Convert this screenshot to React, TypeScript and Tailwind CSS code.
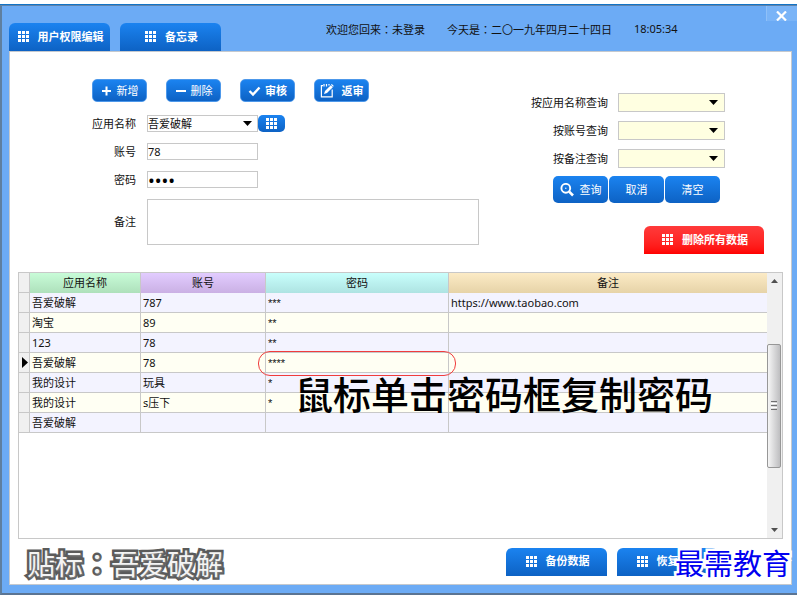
import React from 'react';

const UI_FONT = "font-['Noto_Sans','Noto_Sans_CJK_SC',sans-serif]";

function GridIcon() {
  return (
    <svg width="11" height="11" viewBox="0 0 11 11" fill="#fff" shapeRendering="crispEdges" aria-hidden="true">
      {[0, 4, 8].map((y) => [0, 4, 8].map((x) => <rect key={x + '-' + y} x={x} y={y} width="3" height="3" />))}
    </svg>
  );
}

function PlusIcon() {
  return (
    <svg width="11" height="11" viewBox="0 0 11 11" stroke="#fff" strokeWidth="2" aria-hidden="true">
      <path d="M1 6H10M5.5 1.5V10.5" />
    </svg>
  );
}

function MinusIcon() {
  return (
    <svg width="11" height="11" viewBox="0 0 11 11" stroke="#fff" strokeWidth="2" aria-hidden="true">
      <path d="M1 6H11" />
    </svg>
  );
}

function CheckIcon() {
  return (
    <svg width="13" height="12" viewBox="0 0 13 12" fill="none" stroke="#fff" strokeWidth="2.4" aria-hidden="true">
      <path d="M1.5 6L5 9.5L11.5 2.5" />
    </svg>
  );
}

function EditIcon() {
  return (
    <svg width="14" height="15" viewBox="0 0 14 15" fill="none" stroke="#fff" strokeWidth="1.2" aria-hidden="true">
      <path d="M3 2.6H1.4V13.8H12.2V6.5" />
      <path d="M4 1V3.5M6.5 1V3.5M9 1V2.5" />
      <path d="M4 11L5 8L10.8 2.2L12.8 4.2L7 10Z" fill="#fff" stroke="none" />
      <path d="M11.4 1.4L13.4 3.4" />
    </svg>
  );
}

function SearchIcon() {
  return (
    <svg width="14" height="14" viewBox="0 0 14 14" fill="none" stroke="#fff" aria-hidden="true">
      <circle cx="5.8" cy="5.3" r="4.4" strokeWidth="1.9" />
      <path d="M9.2 8.7L13 12.5" strokeWidth="2.6" />
      <circle cx="5.8" cy="5.3" r="0.7" fill="#fff" stroke="none" />
    </svg>
  );
}

function Triangle({ className = '' }: { className?: string }) {
  return (
    <svg className={className} width="9" height="5" viewBox="0 0 9 5" aria-hidden="true">
      <path d="M0 0H9L4.5 5Z" />
    </svg>
  );
}

const BLUE = 'bg-linear-to-b from-[#1b83f0] to-[#0d62c4] text-white';

function ToolButton({ icon, label, bold, gap }: { icon: React.ReactNode; label: string; bold?: boolean; gap: string }) {
  return (
    <button
      type="button"
      className={`flex h-[23px] w-[55px] items-center justify-center rounded-[5px] border border-[#4d98ea] ${BLUE} ${gap} ${bold ? 'font-bold' : ''}`}
    >
      {icon}
      {label}
    </button>
  );
}

function TabButton({ label, tone = BLUE, width = 'w-[101px]' }: { label: string; tone?: string; width?: string }) {
  return (
    <button
      type="button"
      className={`flex h-7 items-center justify-center gap-[9px] rounded-t-[6px] pb-px pl-[2px] font-bold ${width} ${tone}`}
    >
      <GridIcon />
      {label}
    </button>
  );
}

function Colon() {
  return <span className="font-['Noto_Sans_CJK_TC',sans-serif]">：</span>;
}

function QueryRow({ id, label }: { id: string; label: string }) {
  return (
    <div className="flex items-center gap-[10px]">
      <label htmlFor={id}>{label}</label>
      <div className="relative">
        <select id={id} className="block h-[19px] w-[107px] appearance-none border border-[#c8c8c8] bg-[#ffffe1] px-1">
          <option></option>
        </select>
        <Triangle className="pointer-events-none absolute top-[7px] right-[7px]" />
      </div>
    </div>
  );
}

const ROWS = [
  ['吾爱破解', '787', '***', 'https://www.taobao.com'],
  ['淘宝', '89', '**', ''],
  ['123', '78', '**', ''],
  ['吾爱破解', '78', '****', ''],
  ['我的设计', '玩具', '*', ''],
  ['我的设计', 's压下', '*', ''],
  ['吾爱破解', '', '', ''],
];
const CURRENT_ROW = 3;

const HEADS = [
  { label: '应用名称', tone: 'from-[#c8fcd8] to-[#aee0bb]' },
  { label: '账号', tone: 'from-[#e2ccff] to-[#cab0e4]' },
  { label: '密码', tone: 'from-[#c8fffc] to-[#aee3e2]' },
  { label: '备注', tone: 'from-[#fcebc6] to-[#e6d3a8]' },
];

function DataGrid() {
  return (
    <div className="relative mx-2 flex flex-1 border border-[#c8c8c8]">
      <div className="min-w-0 flex-1">
        <table className="w-full table-fixed border-separate border-spacing-0 leading-4">
          <colgroup>
            <col className="w-[11px]" />
            <col className="w-[111px]" />
            <col className="w-[125px]" />
            <col className="w-[183px]" />
            <col />
          </colgroup>
          <thead>
            <tr>
              <th className="h-5 border-r border-b border-[#c8c8c8] bg-[#f0f0f0] p-0" aria-label="当前行" />
              {HEADS.map((h) => (
                <th
                  key={h.label}
                  scope="col"
                  className={`h-5 border-r border-[#c8c8c8] bg-linear-to-b p-0 font-normal last:border-r-0 ${h.tone}`}
                >
                  {h.label}
                </th>
              ))}
            </tr>
          </thead>
          <tbody>
            {ROWS.map((row, i) => (
              <tr key={i} className={i % 2 ? 'bg-[#fffff3]' : 'bg-[#f3f3ff]'}>
                <td className="h-5 border-r border-b border-[#c8c8c8] bg-[#f0f0f0] p-0">
                  {i === CURRENT_ROW && (
                    <svg className="ml-[3px] block" width="6" height="11" viewBox="0 0 6 11" aria-hidden="true">
                      <path d="M0 0L6 5.5L0 11Z" />
                    </svg>
                  )}
                </td>
                {row.map((cell, j) => (
                  <td
                    key={j}
                    className={`h-5 border-r border-b border-[#c8c8c8] py-0 pr-0 pl-[2px] last:border-r-0 ${j === 2 ? "font-['Liberation_Sans',sans-serif]" : ''}`}
                  >
                    {cell}
                  </td>
                ))}
              </tr>
            ))}
          </tbody>
        </table>
      </div>

      <div className="flex w-[15px] flex-col bg-[#f0f0f0]">
        <button type="button" aria-label="向上滚动" className="flex h-5 items-center justify-center pb-1">
          <svg width="7" height="4" viewBox="0 0 7 4" fill="#505050" aria-hidden="true">
            <path d="M3.5 0L7 4H0Z" />
          </svg>
        </button>
        <div className="flex-1" />
        <div className="flex h-[124px] w-[14px] flex-col items-center justify-center gap-px rounded-[2px] border border-[#979797] bg-linear-to-r from-[#f6f6f6] to-[#bebec0]">
          <i className="h-px w-[6px] bg-[#707070]" />
          <i className="h-px w-[6px] bg-white" />
          <i className="h-px w-[6px] bg-[#707070]" />
          <i className="h-px w-[6px] bg-white" />
          <i className="h-px w-[6px] bg-[#707070]" />
        </div>
        <div className="flex-1" />
        <button type="button" aria-label="向下滚动" className="flex h-5 items-center justify-center pt-1">
          <svg width="7" height="4" viewBox="0 0 7 4" fill="#505050" aria-hidden="true">
            <path d="M0 0H7L3.5 4Z" />
          </svg>
        </button>
      </div>

      <div className="pointer-events-none absolute top-[78px] left-[239px] h-[25px] w-[198px] rounded-[12px] border border-[#f03c3c]" />
      <p className="pointer-events-none absolute top-[96px] left-[276px] font-['Noto_Sans_CJK_SC',sans-serif] text-[38px] leading-[48px] font-medium whitespace-nowrap text-black">
        鼠标单击密码框复制密码
      </p>
    </div>
  );
}

export default function App() {
  return (
    <div className={`flex min-h-screen flex-col bg-white pt-1 text-[11px] leading-4 text-[#111] ${UI_FONT}`}>
      <div className="flex flex-1 flex-col border-t border-[#1173c6]">
        <div className="flex flex-1 flex-col border-t border-b-2 border-l-2 border-t-[#5f83ab] border-b-[#5b7492] border-l-[#5f7f9f] bg-[#6cabf5] pr-[5px] pb-2 pl-[7px]">
          <header className="flex h-[45px] items-start">
            <nav className="flex gap-[10px] self-end">
              <TabButton label="用户权限编辑" />
              <TabButton label="备忘录" />
            </nav>
            <div className="mt-[15px] ml-[105px] flex gap-[22px] whitespace-nowrap">
              <span>
                欢迎您回来
                <Colon />
                未登录
              </span>
              <span>
                今天是
                <Colon />
                二〇一九年四月二十四日
              </span>
              <time>18:05:34</time>
            </div>
            <button
              type="button"
              aria-label="关闭"
              className="-mr-[5px] ml-auto flex h-[15px] w-[31px] items-center justify-center border-l border-[#8fc0f8] bg-[#7ab4f7]"
            >
              <svg className="mt-1 mr-px" width="11" height="10" viewBox="0 0 11 10" stroke="#fff" strokeWidth="2.2" aria-hidden="true">
                <path d="M1 0.5L10 9.5M10 0.5L1 9.5" />
              </svg>
            </button>
          </header>

          <main className="flex flex-1 flex-col border border-[#c5c9ce] bg-white">
            <div className="flex justify-between pb-[18px]">
              <form className="pt-[27px] pl-[82px]" onSubmit={(e) => e.preventDefault()}>
                <div className="flex gap-[19px]">
                  <ToolButton icon={<PlusIcon />} label="新增" gap="gap-[5px]" />
                  <ToolButton icon={<MinusIcon />} label="删除" gap="gap-[5px]" />
                  <ToolButton icon={<CheckIcon />} label="审核" gap="gap-1" bold />
                  <ToolButton icon={<EditIcon />} label="返审" gap="gap-2" bold />
                </div>
                <div className="mt-[13px] grid grid-cols-[44px_auto] items-center gap-x-[11px] gap-y-[11px]">
                  <label htmlFor="app" className="text-right">应用名称</label>
                  <div className="flex">
                    <div className="relative">
                      <select id="app" className="block h-[17px] w-[111px] appearance-none border border-[#c8c8c8] bg-white leading-[15px]">
                        <option>吾爱破解</option>
                      </select>
                      <Triangle className="pointer-events-none absolute top-[6px] right-[6px]" />
                    </div>
                    <button type="button" aria-label="选择应用" className={`flex h-[17px] w-[27px] items-center justify-center rounded-[5px] ${BLUE}`}>
                      <GridIcon />
                    </button>
                  </div>
                  <label htmlFor="account" className="text-right">账号</label>
                  <input id="account" defaultValue="78" className="h-[17px] w-[111px] border border-[#c8c8c8]" />
                  <label htmlFor="pwd" className="text-right">密码</label>
                  <input id="pwd" type="password" defaultValue="1234" className="h-[17px] w-[111px] border border-[#c8c8c8] text-[18px] leading-[15px] text-black" />
                  <label htmlFor="memo" className="text-right">备注</label>
                  <textarea id="memo" className="block h-[46px] w-[332px] resize-none border border-[#c8c8c8]" />
                </div>
              </form>

              <form className="flex flex-col items-end pt-[41px] pr-[27px]" onSubmit={(e) => e.preventDefault()}>
                <div className="mr-[39px] flex flex-col items-end gap-[9px]">
                  <QueryRow id="q-app" label="按应用名称查询" />
                  <QueryRow id="q-account" label="按账号查询" />
                  <QueryRow id="q-memo" label="按备注查询" />
                </div>
                <div className="mt-2 mr-11 flex gap-px">
                  <button type="button" className={`flex h-[27px] w-[55px] items-center justify-center gap-[6px] rounded-[5px] ${BLUE}`}>
                    <SearchIcon />
                    查询
                  </button>
                  <button type="button" className={`h-[27px] w-[55px] rounded-[5px] ${BLUE}`}>取消</button>
                  <button type="button" className={`h-[27px] w-[55px] rounded-[5px] ${BLUE}`}>清空</button>
                </div>
                <div className="mt-[23px]">
                  <TabButton label="删除所有数据" tone="bg-linear-to-b from-[#ff3a3a] to-[#ff0000] text-white" width="w-[120px]" />
                </div>
              </form>
            </div>

            <DataGrid />

            <footer className="relative flex h-[45px] items-center justify-between pr-[73px] pl-[17px]">
              <p
                className="mt-1 text-[28px] leading-8 font-normal text-[#f4f4f4] [paint-order:stroke_fill] [-webkit-text-stroke:5px_#5a5a5a] [text-shadow:1px_1px_2px_#888]"
              >
                贴标
                <Colon />
                吾爱破解
              </p>
              <div className="flex gap-[10px]">
                <TabButton label="备份数据" />
                <TabButton label="恢复数据" />
              </div>
              <p className="pointer-events-none absolute top-[7px] right-0 font-['Noto_Sans_CJK_SC',sans-serif] text-[29px] leading-8 font-normal text-[#0000f0] [paint-order:stroke_fill] [-webkit-text-stroke:5px_#fff]">
                最需教育
              </p>
            </footer>
          </main>
        </div>
      </div>
    </div>
  );
}
